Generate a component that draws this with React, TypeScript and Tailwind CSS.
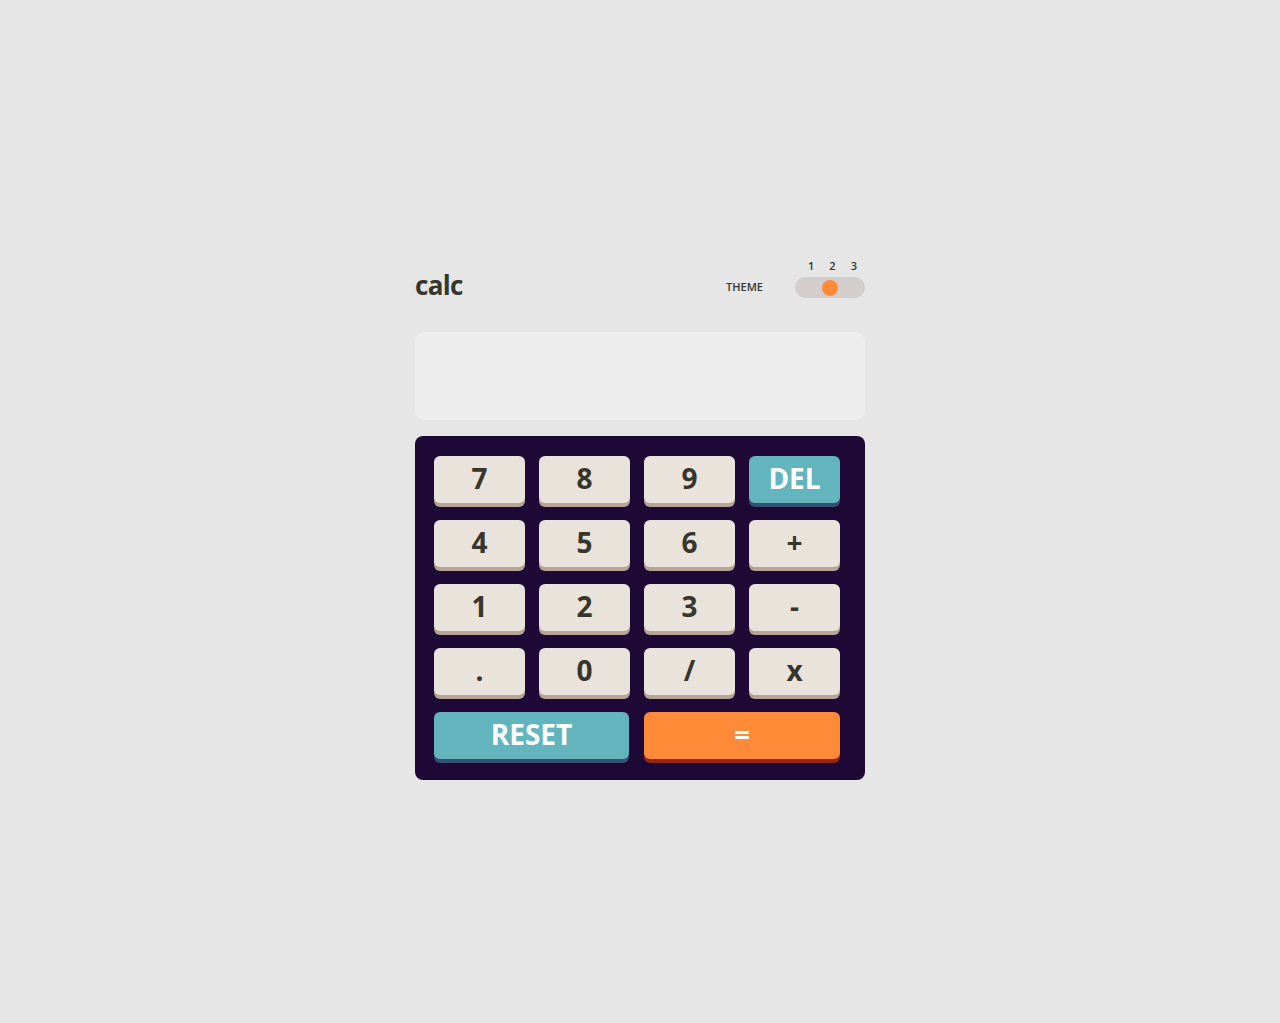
const keys = ["7", "8", "9", "DEL", "4", "5", "6", "+", "1", "2", "3", "-", ".", "0", "/", "x"];

const Key = ({ label }: { label: string }) => {
  const isDel = label === "DEL";
  return (
    <button
      className={
        isDel
          ? "h-[47px] w-[91px] pb-[4px] rounded-[6px] bg-[#62b5bd] text-[28px] font-bold text-white shadow-[0_4px_0_#3a4d74]"
          : "h-[47px] w-[91px] pb-[4px] rounded-[6px] bg-[#e9e3dc] text-[28px] font-bold text-[#36362c] shadow-[0_4px_0_#b4a597]"
      }
    >
      {label}
    </button>
  );
};

export default function App() {
  return (
    <div
      className="min-h-screen w-full bg-[#e6e6e6] flex justify-center"
      style={{ fontFamily: "'Open Sans', 'Liberation Sans', sans-serif" }}
    >
      <div className="w-[450px] mt-[260px]">
        {/* Header */}
        <div className="flex items-end justify-between">
          <h1 className="text-[26px] font-bold leading-none text-[#36362c] tracking-tight">calc</h1>
          <div className="flex items-end">
            <span className="text-[11px] font-semibold text-[#36362c] mr-[32px] mb-[3px]">THEME</span>
            <div className="flex flex-col">
              <div className="flex justify-between pl-[13px] pr-[8px] text-[11px] font-semibold text-[#36362c] leading-none mb-[6px]">
                <span>1</span>
                <span>2</span>
                <span>3</span>
              </div>
              <div className="flex h-[21px] w-[70px] items-center justify-center rounded-full bg-[#d3cdcd]">
                <div className="h-[16px] w-[16px] rounded-full bg-[#ff8b38]" />
              </div>
            </div>
          </div>
        </div>

        {/* Display */}
        <div className="mt-[34px] h-[88px] rounded-[10px] bg-[#ededed]" />

        {/* Keypad */}
        <div className="mt-[16px] rounded-[8px] bg-[#1e0836] pt-[20px] pb-[21px] pl-[19px] pr-[25px]">
          <div className="grid grid-cols-[repeat(4,91px)] gap-x-[14px] gap-y-[17px]">
            {keys.map((k) => (
              <Key key={k} label={k} />
            ))}
            <button className="col-span-2 h-[47px] w-[195px] pb-[4px] rounded-[6px] bg-[#62b5bd] text-[28px] font-bold text-white shadow-[0_4px_0_#3a4d74]">
              RESET
            </button>
            <button className="col-span-2 h-[47px] w-[196px] pb-[4px] rounded-[6px] bg-[#ff8b38] text-[28px] font-bold text-white shadow-[0_4px_0_#93261a]">
              =
            </button>
          </div>
        </div>
      </div>
    </div>
  );
}
